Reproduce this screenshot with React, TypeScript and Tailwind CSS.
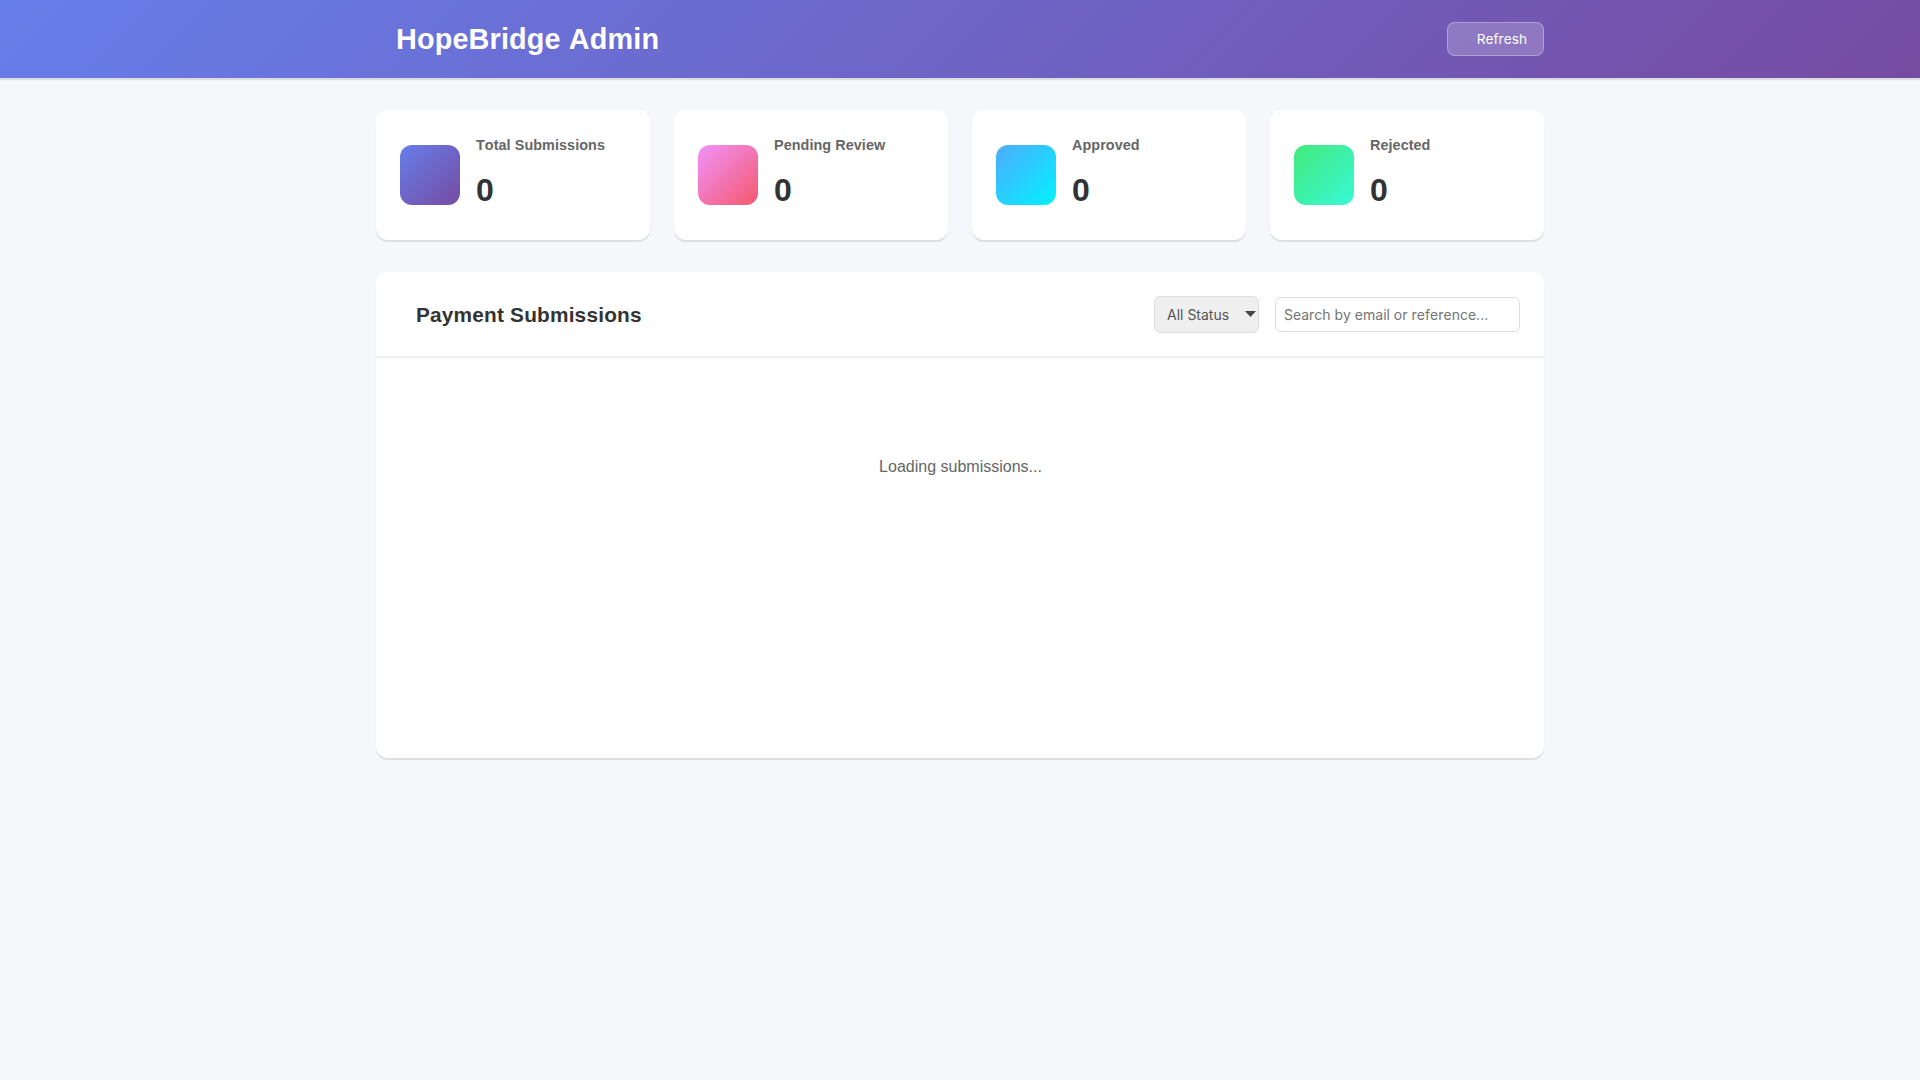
import React from "react";

const stats = [
  { label: "Total Submissions", icon: "bg-[linear-gradient(135deg,#667eea_0%,#764ba2_100%)]" },
  { label: "Pending Review", icon: "bg-[linear-gradient(135deg,#f093fb_0%,#f5576c_100%)]" },
  { label: "Approved", icon: "bg-[linear-gradient(135deg,#4facfe_0%,#00f2fe_100%)]" },
  { label: "Rejected", icon: "bg-[linear-gradient(135deg,#43e97b_0%,#38f9d7_100%)]" },
];

export default function App() {
  return (
    <div className="min-h-[1080px] bg-[#f5f7fa] font-['Liberation_Sans',sans-serif] leading-[1.6] antialiased [font-kerning:none]">
      <header className="h-[78px] bg-[linear-gradient(135deg,#667eea_0%,#764ba2_100%)] shadow-[0_2px_1px_rgba(0,0,0,0.1)]">
        <div className="mx-auto flex h-full w-[1168px] items-center justify-between pl-5">
          <h1 className="text-[28.8px] font-bold tracking-[0.15px] text-white">HopeBridge Admin</h1>
          <button className="flex h-[34px] w-[97px] items-center justify-end rounded-lg border border-white/30 bg-white/20 pt-px pr-4 font-['Inter',sans-serif] text-[13.6px] font-normal tracking-[0.05px] text-white">
            Refresh
          </button>
        </div>
      </header>
      <main className="mx-auto w-[1168px] pt-8">
        <section className="grid grid-cols-4 gap-6">
          {stats.map((s) => (
            <div key={s.label} className="flex h-[130px] items-center gap-4 rounded-xl bg-white p-6 shadow-[0_2px_1px_rgba(0,0,0,0.1)]">
              <div className={`h-[60px] w-[60px] rounded-xl ${s.icon}`} />
              <div>
                <div className="mb-2 text-[14.4px] font-bold tracking-[0.06px] text-[#666]">{s.label}</div>
                <div className="text-[32px] font-bold text-[#333]">0</div>
              </div>
            </div>
          ))}
        </section>
        <section className="mt-8 h-[486px] rounded-xl bg-white shadow-[0_2px_1px_rgba(0,0,0,0.1)]">
          <div className="flex h-[86px] items-center justify-between border-b-2 border-[#f0f0f0] pr-6 pl-10">
            <h2 className="pt-px text-[20.8px] font-bold tracking-[0.2px] text-[#333]">Payment Submissions</h2>
            <div className="flex items-center gap-4">
              <div className="relative">
                <select className="block h-[37px] w-[105px] appearance-none rounded-md border border-[#ddd] bg-[#efefef] px-3 pt-[3px] font-['Inter',sans-serif] text-[14px] text-[#555]">
                  <option>All Status</option>
                </select>
                <svg className="pointer-events-none absolute top-[15px] right-[3px]" width="11" height="6" viewBox="0 0 11 6">
                  <path d="M0 0H11L5.5 6Z" fill="#444" />
                </svg>
              </div>
              <input
                placeholder="Search by email or reference..."
                className="h-[35px] w-[245px] rounded-md border border-[#ddd] bg-white px-2 font-['Inter',sans-serif] text-[14px] placeholder:text-[#757575]"
              />
            </div>
          </div>
          <p className="pt-[96px] pl-px text-center text-[16px] text-[#666]">Loading submissions...</p>
        </section>
      </main>
    </div>
  );
}
